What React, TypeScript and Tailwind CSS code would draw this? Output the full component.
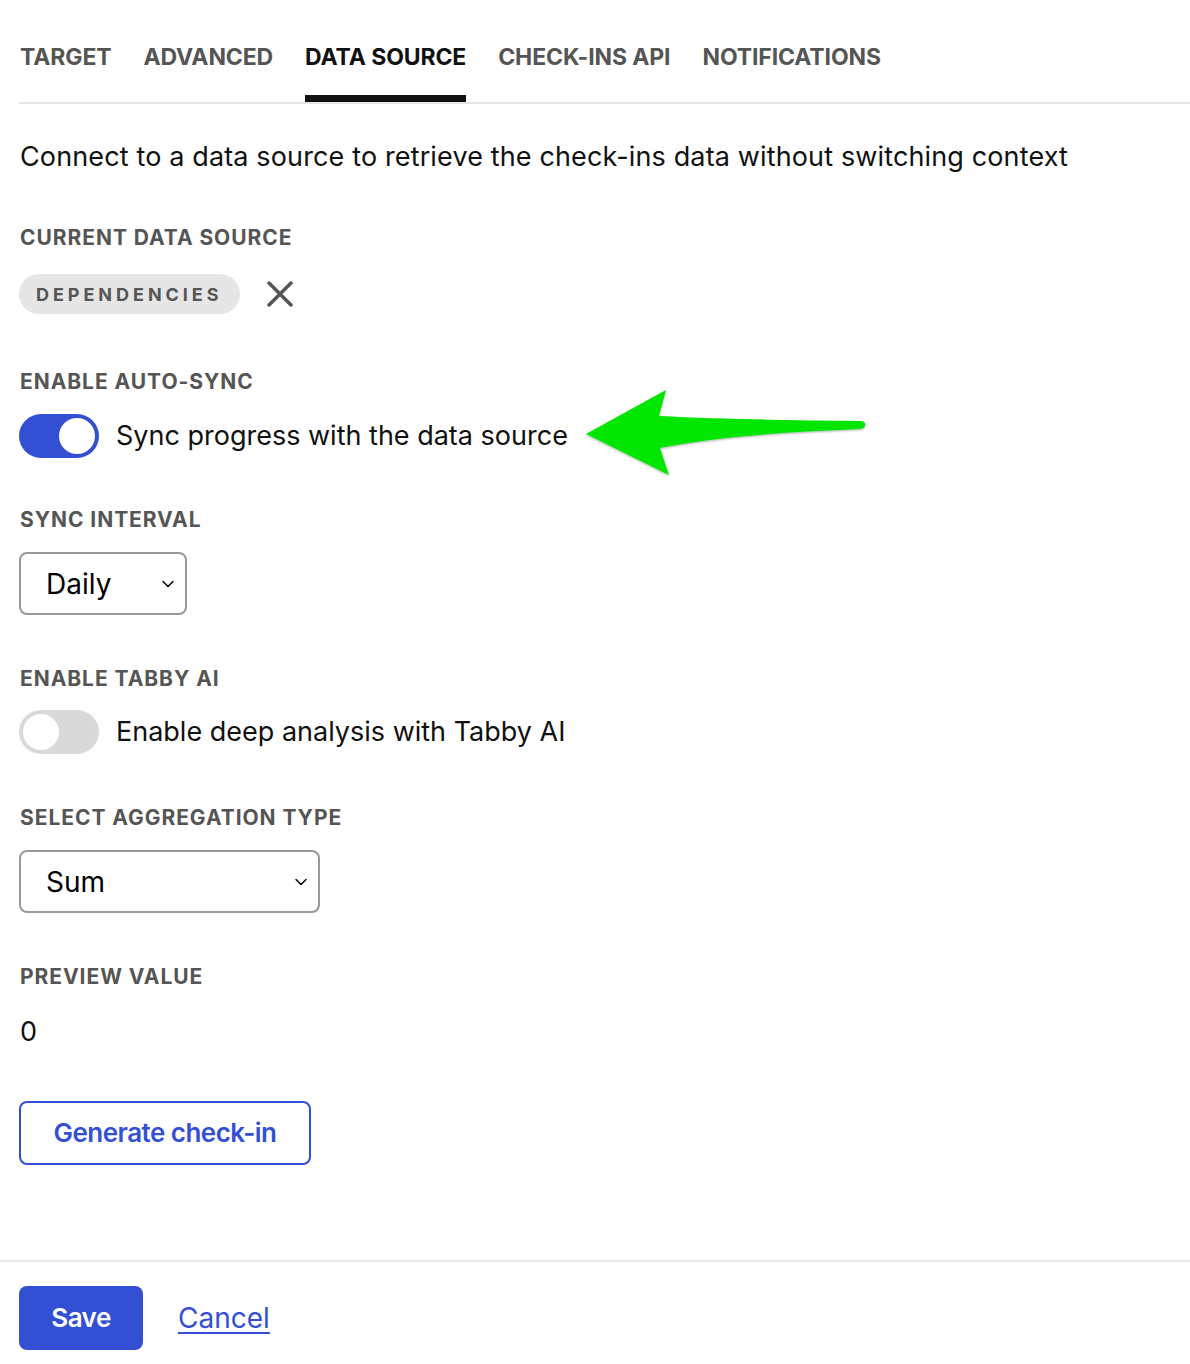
import { ChevronDown } from 'lucide-react';

const tabs = ['TARGET', 'ADVANCED', 'DATA SOURCE', 'CHECK-INS API', 'NOTIFICATIONS'];

function Label({ children }: { children: React.ReactNode }) {
    return <div className="text-[21px] leading-6 font-bold tracking-[0.045em] text-[#555]">{children}</div>;
}

function Toggle({ on }: { on: boolean }) {
    return (
        <div className={`w-[80px] h-[44px] rounded-full p-[4px] flex ${on ? 'bg-[#3350d4] justify-end' : 'bg-[#d9d9d9] justify-start'}`}>
            <div className="w-[36px] h-[36px] rounded-full bg-white"></div>
        </div>
    );
}

function Select({ value, width }: { value: string; width: string }) {
    return (
        <div className={`${width} h-[63px] border-2 border-[#999] rounded-lg flex items-center justify-between pl-[25px] pr-[7px]`}>
            <span className="text-[28px] text-black">{value}</span>
            <ChevronDown className="w-[20px] h-[20px] text-black" strokeWidth={1.75} />
        </div>
    );
}

function GreenArrow() {
    return (
        <svg width="285" height="90" viewBox="0 0 285 90" className="ml-[16px] -my-[23px] -mt-[27px]">
            <defs>
                <filter id="sh" x="-10%" y="-20%" width="120%" height="140%">
                    <feDropShadow dx="0" dy="1" stdDeviation="1" floodColor="#000" floodOpacity="0.35" />
                </filter>
            </defs>
            <path
                d="M2 45 L82 1 L75 27 C130 30 200 31 276 32 C283 32 283 39 276 40 C200 43 130 48 76 59 L85 86 Z"
                fill="#00e600"
                filter="url(#sh)"
            />
        </svg>
    );
}

export default function App() {
    return (
        <div className="min-h-screen bg-white text-[#111] font-['Inter','Liberation_Sans',sans-serif] pl-[19px]">
            {/* Tabs */}
            <div className="flex gap-[32px] pt-[40px] border-b-2 border-[#e5e5e5] pl-[1px]">
                {tabs.map(t => (
                    <div
                        key={t}
                        className={`text-[23px] leading-[34px] font-bold tracking-[-0.005em] pb-[21px] border-b-[7px] ${t === 'DATA SOURCE' ? 'text-[#111] border-[#111]' : 'text-[#555] border-transparent'}`}
                    >
                        {t}
                    </div>
                ))}
            </div>

            <p className="text-[27px] leading-8 mt-[37px] pl-[1px] tracking-[0.005em]">
                Connect to a data source to retrieve the check-ins data without switching context
            </p>

            <div className="mt-[53px] pl-[1px]">
                <Label>CURRENT DATA SOURCE</Label>
            </div>
            <div className="flex items-center gap-[27px] mt-[24px]">
                <div className="h-[40px] px-[17px] rounded-full bg-[#e6e6e6] flex items-center text-[18px] font-bold tracking-[0.22em] text-[#555]">
                    DEPENDENCIES
                </div>
                <svg width="26" height="26" viewBox="0 0 26 26" className="text-[#555]">
                    <path d="M2 2 L24 24 M24 2 L2 24" stroke="currentColor" strokeWidth="3.5" strokeLinecap="round" />
                </svg>
            </div>

            <div className="mt-[56px] pl-[1px]">
                <Label>ENABLE AUTO-SYNC</Label>
            </div>
            <div className="flex items-center mt-[20px]">
                <Toggle on={true} />
                <span className="text-[27px] ml-[17px]">Sync progress with the data source</span>
                <GreenArrow />
            </div>

            <div className="mt-[50px] pl-[1px]">
                <Label>SYNC INTERVAL</Label>
            </div>
            <div className="mt-[20px]">
                <Select value="Daily" width="w-[168px]" />
            </div>

            <div className="mt-[52px] pl-[1px]">
                <Label>ENABLE TABBY AI</Label>
            </div>
            <div className="flex items-center mt-[19px]">
                <Toggle on={false} />
                <span className="text-[27px] ml-[17px]">Enable deep analysis with Tabby AI</span>
            </div>

            <div className="mt-[52px] pl-[1px]">
                <Label>SELECT AGGREGATION TYPE</Label>
            </div>
            <div className="mt-[20px]">
                <Select value="Sum" width="w-[301px]" />
            </div>

            <div className="mt-[52px] pl-[1px]">
                <Label>PREVIEW VALUE</Label>
            </div>
            <div className="text-[27px] mt-[23px] pl-[1px]">0</div>

            <button className="mt-[48px] w-[292px] h-[64px] border-2 border-[#3350d4] rounded-lg text-[#3350d4] text-[26px] font-semibold tracking-[-0.02em]">
                Generate check-in
            </button>

            <div className="-ml-[19px] mt-[95px] border-t-2 border-[#e8e8e8] pl-[19px] pt-[24px] flex items-center gap-[35px]">
                <button className="w-[124px] h-[64px] rounded-lg bg-[#3350d4] text-white text-[26px] font-semibold tracking-[-0.02em]">
                    Save
                </button>
                <a href="#" className="text-[28px] text-[#3350d4] underline underline-offset-4">Cancel</a>
            </div>
        </div>
    );
}
